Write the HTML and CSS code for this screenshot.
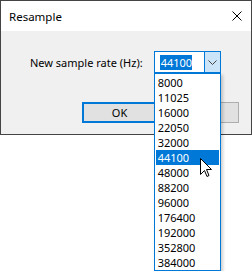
FILE: index.html
```html
<!DOCTYPE html>
<html lang="en">
  <head>
    <meta charset="UTF-8">
    <title>Resample</title>
    <link rel="stylesheet" href="styles.css">
  </head>
  <body>
    <div class="window">
      <div class="titlebar">
        <span class="title">Resample</span>
        <svg class="close" width="10" height="10" viewBox="0 0 10 10">
          <path d="M0.5 0.5 L9.5 9.5 M9.5 0.5 L0.5 9.5" stroke="#000" stroke-width="1" fill="none"/>
        </svg>
      </div>

      <div class="content">
        <div class="rate-row">
          <label class="label">New sample rate (Hz):</label>
          <div class="combo">
            <span class="combo-value">44100</span>
            <span class="combo-button">
              <svg width="9" height="5" viewBox="0 0 9 5">
                <path d="M0.5 0.5 L4.5 4.5 L8.5 0.5" stroke="#444" stroke-width="1" fill="none"/>
              </svg>
            </span>

            <ul class="list">
              <li>8000</li>
              <li>11025</li>
              <li>16000</li>
              <li>22050</li>
              <li>32000</li>
              <li class="selected">44100</li>
              <li>48000</li>
              <li>88200</li>
              <li>96000</li>
              <li>176400</li>
              <li>192000</li>
              <li>352800</li>
              <li>384000</li>
            </ul>

            <svg class="pointer" width="13" height="21" viewBox="0 0 13 21">
              <path d="M0.5 0.5 L0.5 16.5 L4.5 12.5 L7 18.5 L9 17.5 L6.5 11.5 L11.5 11.5 Z" fill="#fff" stroke="#000" stroke-width="1" stroke-linejoin="miter"/>
            </svg>
          </div>
        </div>

        <div class="buttons">
          <button class="button default">OK</button>
          <button class="button">Cancel</button>
        </div>
      </div>
    </div>
  </body>
</html>
```

FILE: styles.css
```css
html {
  box-sizing: border-box;
  font-family: "Noto Sans", "Open Sans", sans-serif;
  font-size: 11px;
}

*,
*:before,
*:after {
  box-sizing: inherit;
}

body {
  background: #fff;
  margin: 0;
  min-height: 271px;
}

.window {
  border: 1px solid #444;
  height: 135px;
  width: 252px;
}

.titlebar {
  align-items: center;
  background: #fff;
  display: flex;
  height: 30px;
  justify-content: space-between;
  padding: 0 9px 0 8px;
}

.title {
  color: #000;
  font-size: 11.5px;
}

.content {
  background: #f0f0f0;
  height: 103px;
  padding-top: 20px;
}

.rate-row {
  align-items: center;
  display: flex;
  gap: 11px;
  padding-left: 29px;
}

.label {
  color: #000;
}

.combo {
  background: #fff;
  border: 1px solid #0078d7;
  display: flex;
  height: 22px;
  position: relative;
  width: 67px;
}

.combo-value {
  align-self: center;
  background: #0078d7;
  color: #fff;
  line-height: 15px;
  margin-left: 5px;
  padding: 0 1px;
  width: 32px;
}

.combo-button {
  align-items: center;
  background: #cce4f7;
  border-left: 1px solid #0078d7;
  display: flex;
  justify-content: center;
  margin-left: auto;
  padding-top: 1px;
  width: 16px;
}

.list {
  background: #fff;
  border: 1px solid #0078d7;
  box-shadow: 2px 2px 3px rgba(0, 0, 0, 0.2);
  left: -1px;
  list-style: none;
  margin: 0;
  padding: 1px 0 0;
  position: absolute;
  top: 21px;
  width: 67px;
  z-index: 2;
}

.list li {
  color: #000;
  height: 15px;
  line-height: 15px;
  margin: 0 1px;
  padding-left: 2px;
}

.list li.selected {
  background: #0078d7;
  color: #fff;
}

.pointer {
  left: 45px;
  position: absolute;
  top: 106px;
  z-index: 3;
}

.buttons {
  display: flex;
  gap: 7px;
  justify-content: flex-end;
  margin-top: 29px;
  padding-right: 12px;
}

.button {
  background: #e1e1e1;
  border: 1px solid #adadad;
  color: #000;
  font-family: inherit;
  font-size: 11px;
  height: 21px;
  padding: 0;
  width: 75px;
}

.button.default {
  border: 2px solid #0078d7;
}
```
